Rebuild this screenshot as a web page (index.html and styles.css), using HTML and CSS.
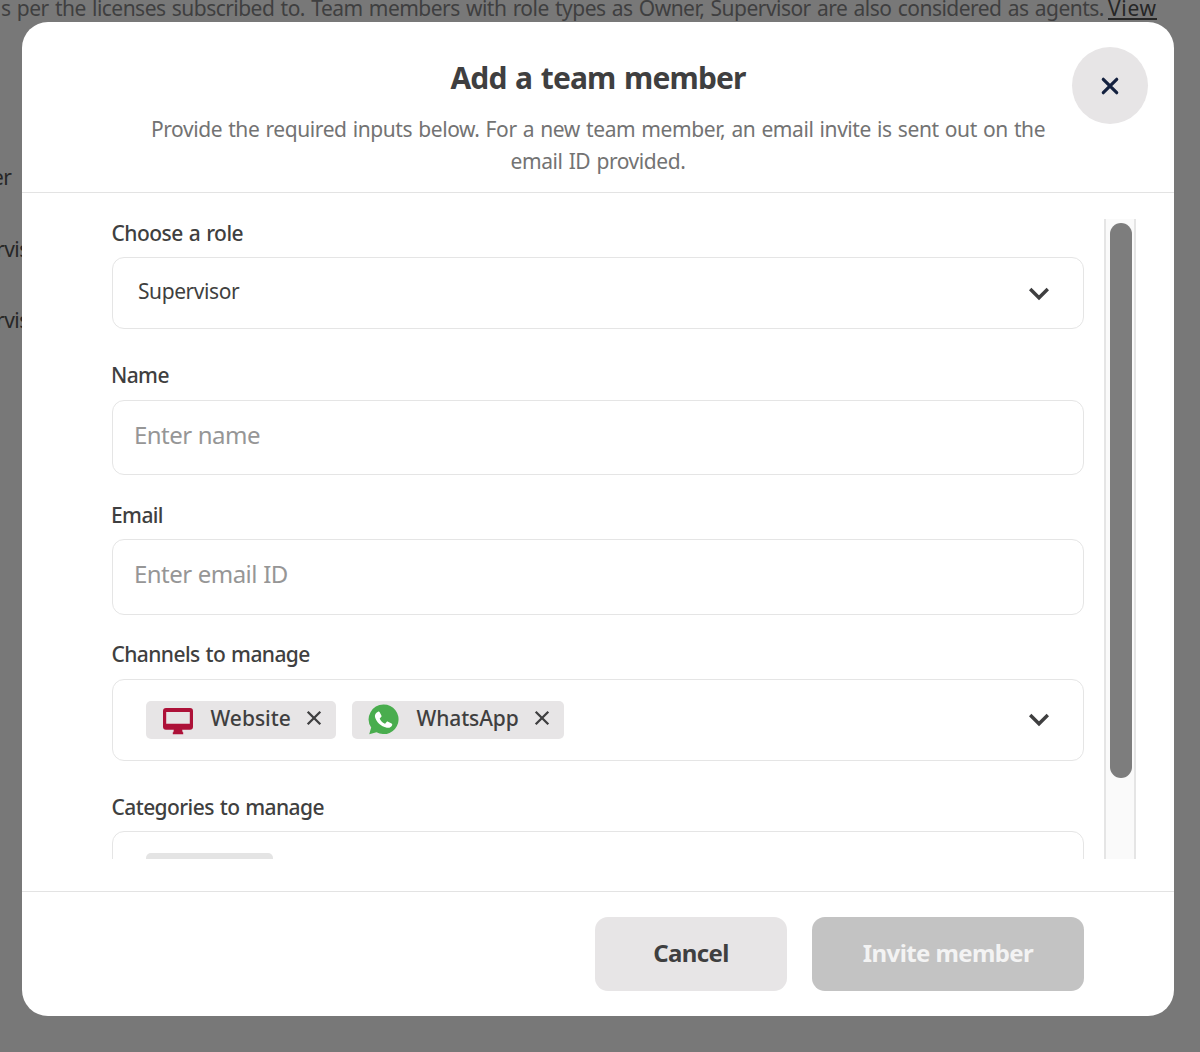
FILE: index.html
```html
<!DOCTYPE html>
<html lang="en">
<head>
<meta charset="utf-8">
<title>Add a team member</title>
<link rel="stylesheet" href="styles.css">
</head>
<body>
<div class="page">
  <p class="notice">s per the licenses subscribed to. Team members with role types as Owner, Supervisor are also considered as agents. </p><a class="notice-link">View</a>
  <div class="roles">
    <span>er</span>
    <span>rvisor</span>
    <span>rvisor</span>
  </div>
</div>

<div class="overlay">
  <section class="modal" role="dialog" aria-labelledby="title">
    <header class="modal-header">
      <h1 id="title">Add a team member</h1>
      <p class="subtitle">Provide the required inputs below. For a new team member, an email invite is sent out on the<br><span class="subtitle-end">email ID provided.</span></p>
      <button class="close" aria-label="Close">
        <svg width="18" height="18" viewBox="0 0 18 18"><path d="M2.3 2.3 15.7 15.7M15.7 2.3 2.3 15.7"/></svg>
      </button>
    </header>

    <div class="modal-body">
      <form class="fields">
        <div class="field field-role">
          <label>Choose a role</label>
          <div class="box select">
            <span class="value">Supervisor</span>
            <svg class="chevron" width="22" height="14" viewBox="0 0 22 14"><path d="M2.2 2 11 10.8 19.8 2"/></svg>
          </div>
        </div>
        <div class="field field-name">
          <label class="short">Name</label>
          <div class="box input"><span class="placeholder">Enter name</span></div>
        </div>
        <div class="field field-email">
          <label class="short">Email</label>
          <div class="box input"><span class="placeholder">Enter email ID</span></div>
        </div>
        <div class="field field-channels">
          <label class="long">Channels to manage</label>
          <div class="box tags">
            <span class="chip chip-website">
              <svg class="monitor" width="30" height="27" viewBox="0 0 30 27"><path fill-rule="evenodd" d="M3 0h24a3 3 0 0 1 3 3v15.700a3 3 0 0 1-3 3h-7.800l.4 2.600h.6V26.200H9.800V24.300h.6l.4-2.600H3a3 3 0 0 1-3-3V3a3 3 0 0 1 3-3ZM3.200 4v11.800h23.600V4Z"/></svg>
              <span class="chip-text">Website</span>
              <svg class="remove" width="16" height="16" viewBox="0 0 16 16"><path d="M1.700 1.700 14.300 14.300M14.300 1.700 1.700 14.300"/></svg>
            </span>
            <span class="chip chip-whatsapp">
              <svg class="whatsapp" width="31" height="31" viewBox="0 0 31 31"><path class="bubble" d="M15.700.5a14.800 14.800 0 1 1-7.200 27.700L1.200 30.200l2-6.700A14.800 14.800 0 0 1 15.700.5Z"/><path class="phone" d="M10 7.700c.6-.4 1.300-.2 1.700.5l1.700 3.200c.3.600.2 1.200-.3 1.600l-1.200 1.200c-.2.300-.2.600 0 .9 1.100 2 2.600 3.500 4.600 4.500.3.200.6.100.8-.1l1.300-1.500c.4-.5.900-.6 1.400-.3l3.600 1.800c.6.300.8.900.6 1.500-.8 2.300-2.900 3.200-5.400 2.700C12.800 22.500 8.200 17.800 7 13c-.4-2 .6-4.300 3-5.300Z"/></svg>
              <span class="chip-text">WhatsApp</span>
              <svg class="remove" width="16" height="16" viewBox="0 0 16 16"><path d="M1.700 1.700 14.300 14.300M14.300 1.700 1.700 14.300"/></svg>
            </span>
            <svg class="chevron" width="22" height="14" viewBox="0 0 22 14"><path d="M2.200 2 11 10.800 19.800 2"/></svg>
          </div>
        </div>
        <div class="field field-categories">
          <label class="long">Categories to manage</label>
          <div class="box tags"><span class="chip chip-blank"></span></div>
        </div>
      </form>
      <div class="scrollbar"><div class="thumb"></div></div>
    </div>

    <footer class="modal-footer">
      <button class="btn cancel">Cancel</button>
      <button class="btn invite">Invite member</button>
    </footer>
  </section>
</div>
</body>
</html>
```
FILE: styles.css
```css
* { box-sizing: border-box; }

body {
  margin: 0;
  height: 1052px;
  overflow: hidden;
  background: #787878;
  color: #3f3f40;
  font: 400 21px/32px "Noto Sans", "Open Sans", sans-serif;
}

h1, p { margin: 0; }
button { border: 0; padding: 0; font: inherit; color: inherit; }
svg { display: block; flex: none; }

/* Page behind the dialog */
.page {
  display: flex;
  flex-wrap: wrap;
  height: 1052px;
  align-content: flex-start;
  align-items: flex-start;
}
.notice {
  width: 1108px;
  margin-top: -8px;
  padding-left: 1px;
  white-space: nowrap;
  letter-spacing: -0.53px;
  word-spacing: 1.35px;
}
.notice-link {
  height: 28px;
  margin-top: -8px;
  border-bottom: 2px solid #262626;
  color: #262626;
  letter-spacing: 0.7px;
}
.roles {
  width: 100%;
  margin-top: 125px;
  margin-left: -4px;
  padding-top: 12px;
  display: flex;
  flex-direction: column;
  gap: 39.5px;
  color: #262626;
  letter-spacing: -0.5px;
}
.roles span:first-child { margin-left: -4px; }

/* Dialog */
.overlay {
  position: absolute;
  inset: 0;
  padding: 22px 26px 36px 22px;
}
.modal {
  height: 994px;
  border-radius: 26px;
  background: #fff;
  display: flex;
  flex-direction: column;
}
.modal-header {
  position: relative;
  height: 171px;
  padding-top: 34px;
  border-bottom: 1px solid #e3e3e3;
  text-align: center;
}
h1 {
  margin-bottom: 13px;
  font-size: 30px;
  line-height: 44px;
  font-weight: 700;
  letter-spacing: -0.85px;
  word-spacing: 1.6px;
}
.subtitle {
  color: #737373;
  letter-spacing: -0.42px;
  word-spacing: 1.1px;
  white-space: nowrap;
}
.close {
  position: absolute;
  top: 25px;
  right: 26px;
  width: 76px;
  height: 77px;
  border-radius: 50%;
  background: #e7e5e6;
  display: grid;
  place-items: center;
}
.close svg { fill: none; stroke: #14213f; stroke-width: 3.2; stroke-linecap: round; }

.modal-body {
  height: 698px;
  padding: 26px 38px 32px 90px;
  display: flex;
  justify-content: space-between;
}
.fields {
  width: 972px;
  height: 640px;
  overflow: hidden;
}
label {
  display: block;
  height: 28px;
  line-height: 28px;
  margin-bottom: 10px;
  margin-left: -0.5px;
  font-weight: 500;
  letter-spacing: -0.52px;
  word-spacing: 1px;
}
label.long { letter-spacing: -0.58px; }
label.short { margin-left: -1px; letter-spacing: -0.6px; }
.box {
  border: 1px solid #e5e5e5;
  border-radius: 12px;
  display: flex;
  align-items: center;
}
.field-role .box { height: 72px; }
.field-name { margin-top: 32px; }
.field-name label, .field-channels label { margin-bottom: 11px; }
.field-name .box { height: 75px; }
.field-email { margin-top: 26px; }
.field-email .box { height: 76px; }
.field-channels { margin-top: 25px; }
.field-channels .box { height: 82px; }
.field-categories { margin-top: 32px; }
.field-categories .box { height: 82px; }

.select { justify-content: space-between; padding: 0 33px 0 25px; }
.select .value { padding-bottom: 4px; letter-spacing: -0.42px; }
.select .chevron { margin-top: 2px; }
.chevron { fill: none; stroke: #3f3f40; stroke-width: 3.4; }
.input { padding: 0 21px; }
.placeholder {
  padding-bottom: 6px;
  color: #969696;
  font-size: 24px;
  letter-spacing: -0.55px;
  word-spacing: 0.6px;
}
.tags { gap: 16px; padding: 0 33px; }
.tags .chevron { margin-left: auto; }
.chip {
  height: 38px;
  padding: 0 14px 0 17px;
  border-radius: 5px;
  background: #e7e5e6;
  display: flex;
  align-items: center;
}
.chip-website { width: 190px; }
.chip-whatsapp { width: 212px; padding-left: 16px; }
.chip-text {
  margin: 0 auto 5px 17.5px;
  font-weight: 500;
  letter-spacing: 0;
}
.chip-whatsapp .chip-text { letter-spacing: -0.1px; }
.chip-blank { width: 127px; background: #e4e4e4; }
.monitor { margin-top: 2px; fill: #ad1138; }
.whatsapp { margin-bottom: 1px; }
.remove { margin-bottom: 4px; fill: none; stroke: #3f3f40; stroke-width: 2.3; }
.bubble { fill: #49ad4e; }
.phone { fill: #fff; }

.scrollbar {
  width: 32px;
  height: 640px;
  padding: 4px;
  border: solid #e5e5e5;
  border-width: 0 2px;
  background: #fafafa;
}
.thumb { width: 22px; height: 555px; border-radius: 11px; background: #7d7d7d; }

.modal-footer {
  height: 125px;
  padding: 25px 90px 0 0;
  border-top: 1px solid #e3e3e3;
  display: flex;
  justify-content: flex-end;
  gap: 25px;
}
.btn {
  height: 74px;
  padding-bottom: 2px;
  border-radius: 13px;
  font-size: 24px;
  font-weight: 700;
  letter-spacing: -0.6px;
}
.cancel { width: 192px; background: #e7e5e6; }
.invite { width: 272px; background: #c3c3c3; color: #f3f3f3; }
```
